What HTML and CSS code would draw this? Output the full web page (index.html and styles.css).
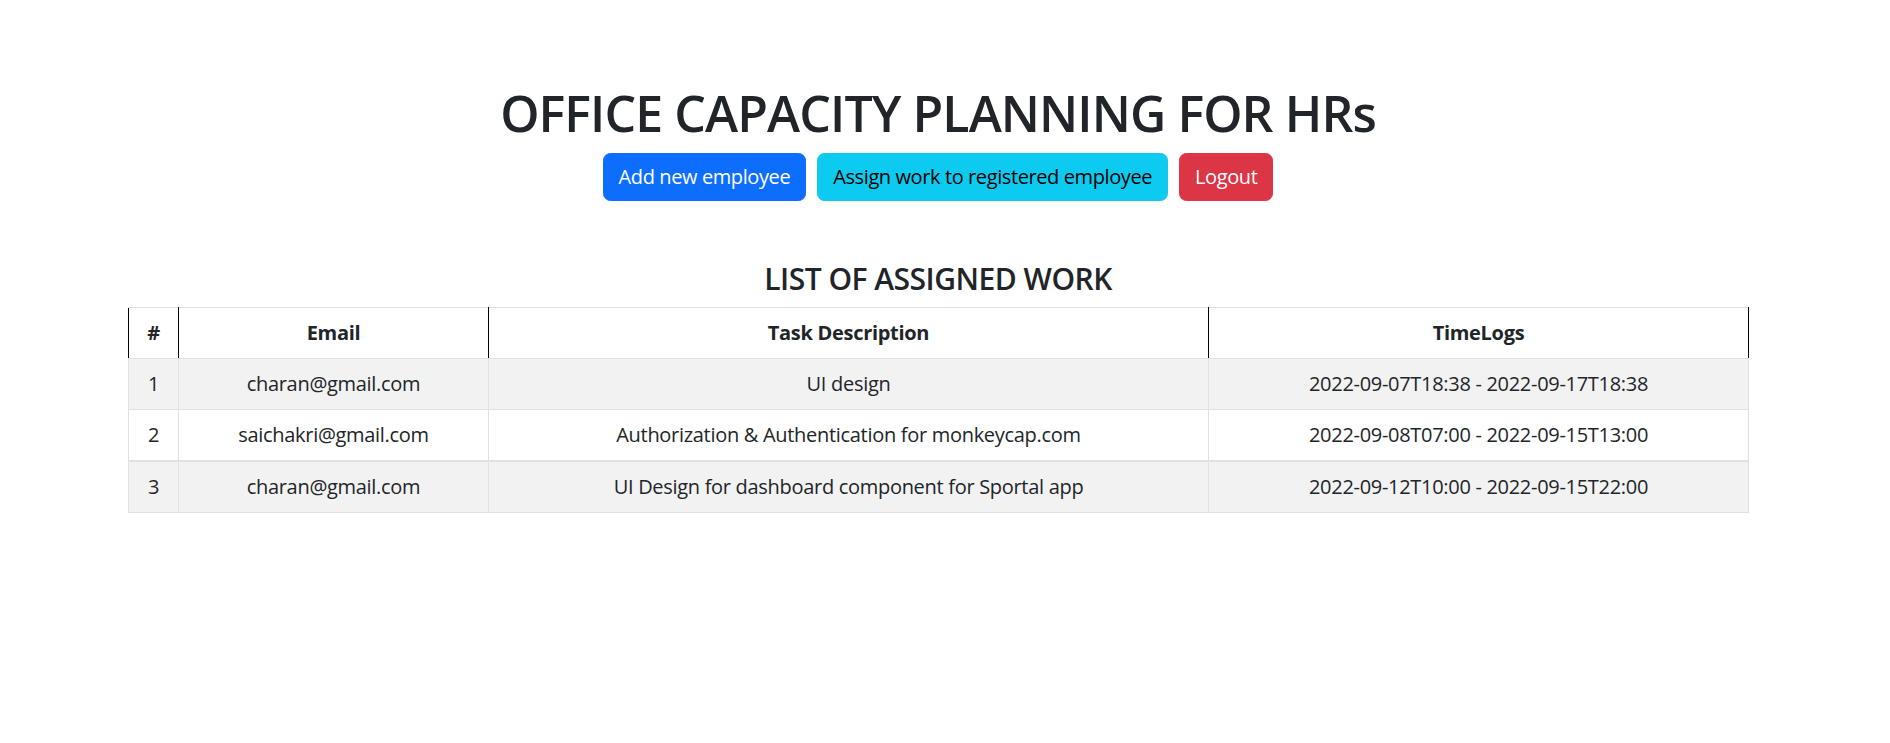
FILE: index.html
```html
<!DOCTYPE html>
<html lang="en">
<head>
<meta charset="utf-8">
<title>Office Capacity Planning</title>
<link rel="stylesheet" href="styles.css">
</head>
<body>
<main class="page">
  <h1 class="title">OFFICE CAPACITY PLANNING FOR HRs</h1>
  <div class="actions">
    <button class="btn btn-primary">Add new employee</button>
    <button class="btn btn-info">Assign work to registered employee</button>
    <button class="btn btn-danger">Logout</button>
  </div>
  <h4 class="section-title">LIST OF ASSIGNED WORK</h4>
  <table class="work-table">
    <colgroup>
      <col class="c-num">
      <col class="c-email">
      <col class="c-task">
      <col class="c-time">
    </colgroup>
    <thead>
      <tr>
        <th>#</th>
        <th>Email</th>
        <th>Task Description</th>
        <th>TimeLogs</th>
      </tr>
    </thead>
    <tbody>
      <tr class="odd">
        <td>1</td>
        <td>charan@gmail.com</td>
        <td>UI design</td>
        <td>2022-09-07T18:38 - 2022-09-17T18:38</td>
      </tr>
      <tr>
        <td>2</td>
        <td>saichakri@gmail.com</td>
        <td>Authorization &amp; Authentication for monkeycap.com</td>
        <td>2022-09-08T07:00 - 2022-09-15T13:00</td>
      </tr>
      <tr class="odd divided">
        <td>3</td>
        <td>charan@gmail.com</td>
        <td>UI Design for dashboard component for Sportal app</td>
        <td>2022-09-12T10:00 - 2022-09-15T22:00</td>
      </tr>
    </tbody>
  </table>
</main>
</body>
</html>
```

FILE: styles.css
```css
html, body {
  margin: 0;
  background: #fff;
}

body {
  padding-right: 14px;
  font-family: "Open Sans", "Noto Sans", sans-serif;
  color: #212529;
  font-size: 20px;
  line-height: 1.5;
}

.page {
  width: 1620px;
  margin: 0 auto;
}

.title {
  margin: 83px 0 10px;
  font-size: 50px;
  line-height: 60px;
  font-weight: 600;
  text-align: center;
  letter-spacing: -0.9px;
}

.actions {
  display: flex;
  justify-content: center;
  gap: 11px;
}

.btn {
  font-family: inherit;
  font-size: 20px;
  line-height: 30px;
  padding: 8px 15px;
  border: 1px solid transparent;
  border-radius: 7.5px;
  cursor: pointer;
  letter-spacing: -0.4px;
}

.btn-primary {
  background: #0d6efd;
  border-color: #0d6efd;
  color: #fff;
}

.btn-info {
  background: #0dcaf0;
  border-color: #0dcaf0;
  color: #000;
}

.btn-danger {
  background: #dc3545;
  border-color: #dc3545;
  color: #fff;
}

.section-title {
  margin: 60px 0 10px;
  font-size: 30px;
  line-height: 36px;
  font-weight: 600;
  text-align: center;
  letter-spacing: -0.5px;
}

.work-table {
  width: 100%;
  border-collapse: collapse;
  table-layout: fixed;
  border: 1px solid #dee2e6;
}

.c-num { width: 50px; }
.c-email { width: 310px; }
.c-task { width: 720px; }
.c-time { width: 540px; }

.work-table th,
.work-table td {
  padding: 10px 10px;
  line-height: 30px;
  text-align: center;
  border: 1px solid #dee2e6;
  letter-spacing: -0.3px;
}

.work-table th {
  font-weight: 700;
  border-left: 1px solid #000;
  border-right: 1px solid #000;
}

.work-table tbody tr.odd td {
  background: #f2f2f2;
}

.work-table tbody tr.divided td {
  border-top: 2px solid #dee2e6;
}
```
